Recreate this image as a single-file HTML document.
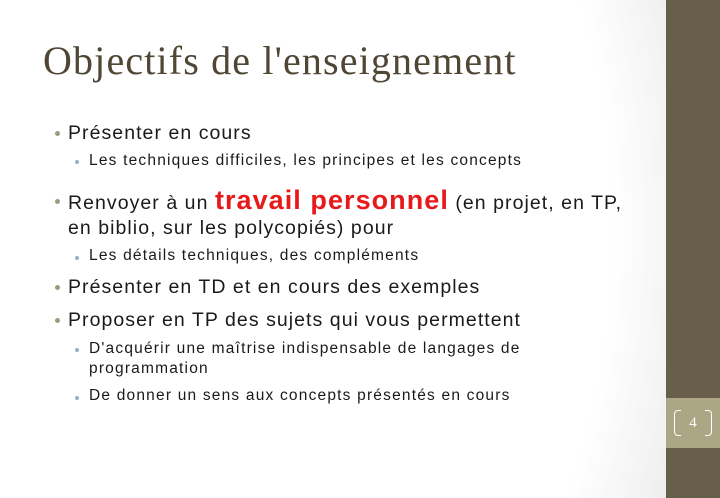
<!DOCTYPE html>
<html><head><meta charset="utf-8"><style>
body{margin:0;width:720px;height:498px;overflow:hidden;position:relative;font-family:"Liberation Sans",sans-serif;
background:radial-gradient(ellipse 560px 800px at 220px 230px,#fff 70%,#e0e0e0 100%);}
.band{position:absolute;left:666px;top:0;width:54px;height:498px;background:#675f49}
.num{position:absolute;left:666px;top:398px;width:54px;height:50px;background:#aba784;color:#fff;font-family:"Liberation Serif",serif;font-size:15px;text-align:center;line-height:50px}
.num span{position:absolute;top:12px;width:6px;height:24px;border:1.5px solid #fff}
h1{position:absolute;left:43px;top:37px;margin:0;font-family:"Liberation Serif",serif;font-weight:normal;font-size:40px;color:#4f4634;letter-spacing:1.15px}
.t{position:absolute;white-space:nowrap;color:#1a1a1a}
.l1{left:68px;font-size:19.5px;letter-spacing:1.05px}
.l2{left:89px;font-size:15.5px;letter-spacing:1.2px}
.b1,.b2{position:absolute;border-radius:50%}
.b1{width:5px;height:5px;background:#9f9a7c;left:55px}
.b2{width:4px;height:4px;background:#93b3bb;left:75px}
.red{color:#e8191a;font-weight:bold;font-size:27px;letter-spacing:1.05px}
</style></head><body>
<div class="band"></div>
<div class="num"><span style="left:8px;border-right:none;border-radius:4px 0 0 4px"></span>4<span style="right:8px;border-left:none;border-radius:0 4px 4px 0"></span></div>
<h1>Objectifs de l'enseignement</h1>
<div class="b1" style="top:131px"></div><div class="t l1" style="top:122px">Présenter en cours</div>
<div class="b2" style="top:160px"></div><div class="t l2" style="top:152px">Les techniques difficiles, les principes et les concepts</div>
<div class="b1" style="top:199px"></div><div class="t l1" style="top:185px">Renvoyer à un <span class="red">travail personnel</span> (en projet, en TP,</div>
<div class="t l1" style="top:217px">en biblio, sur les polycopiés) pour</div>
<div class="b2" style="top:256px"></div><div class="t l2" style="top:247px">Les détails techniques, des compléments</div>
<div class="b1" style="top:285px"></div><div class="t l1" style="top:276px">Présenter en TD et en cours des exemples</div>
<div class="b1" style="top:318px"></div><div class="t l1" style="top:309px">Proposer en TP des sujets qui vous permettent</div>
<div class="b2" style="top:348px"></div><div class="t l2" style="top:340px">D'acquérir une maîtrise indispensable de langages de</div>
<div class="t l2" style="top:360px">programmation</div>
<div class="b2" style="top:396px"></div><div class="t l2" style="top:387px">De donner un sens aux concepts présentés en cours</div>
</body></html>
